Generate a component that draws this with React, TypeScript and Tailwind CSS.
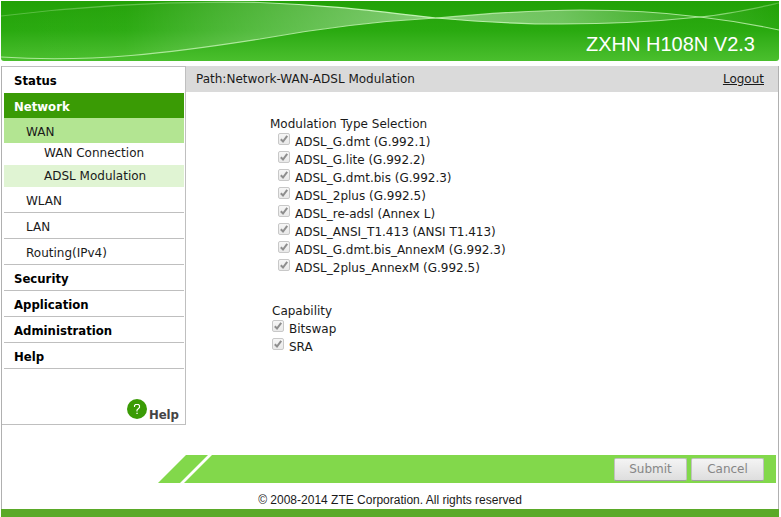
import React from 'react';

const modulationTypes = [
  'ADSL_G.dmt (G.992.1)',
  'ADSL_G.lite (G.992.2)',
  'ADSL_G.dmt.bis (G.992.3)',
  'ADSL_2plus (G.992.5)',
  'ADSL_re-adsl (Annex L)',
  'ADSL_ANSI_T1.413 (ANSI T1.413)',
  'ADSL_G.dmt.bis_AnnexM (G.992.3)',
  'ADSL_2plus_AnnexM (G.992.5)',
];

const capabilities = ['Bitswap', 'SRA'];

function Banner() {
  return (
    <header className="relative mt-px h-[60px] overflow-hidden rounded-b-[3px] bg-linear-to-b from-[#22a107] via-[#2aaa10] to-[#4abf2d]">
      <svg
        className="absolute inset-0 h-full w-full"
        viewBox="0 0 778 60"
        preserveAspectRatio="none"
        aria-hidden="true"
      >
        <defs>
          <linearGradient id="sheen" x1="0" x2="1" y1="0" y2="0">
            <stop offset="0" stopColor="#fff" stopOpacity="0" />
            <stop offset="0.16" stopColor="#fff" stopOpacity="0.02" />
            <stop offset="0.28" stopColor="#fff" stopOpacity="0.16" />
            <stop offset="0.42" stopColor="#fff" stopOpacity="0.3" />
            <stop offset="0.54" stopColor="#fff" stopOpacity="0.42" />
            <stop offset="0.72" stopColor="#fff" stopOpacity="0.34" />
            <stop offset="0.88" stopColor="#fff" stopOpacity="0.1" />
            <stop offset="1" stopColor="#fff" stopOpacity="0" />
          </linearGradient>
          <linearGradient id="upper" x1="0" x2="1" y1="0" y2="0">
            <stop offset="0" stopColor="#c8f5b8" stopOpacity="0.3" />
            <stop offset="0.25" stopColor="#c8f5b8" stopOpacity="0.4" />
            <stop offset="0.4" stopColor="#d8ffcc" stopOpacity="0.9" />
            <stop offset="0.9" stopColor="#c8f5b8" stopOpacity="0.7" />
            <stop offset="1" stopColor="#c8f5b8" stopOpacity="0.3" />
          </linearGradient>
        </defs>
        <path
          d="M0 15C90 4 180 0 259 1.500C330 4 380 11 435 17C480 21 520 23 560 23C620 23 660 20 699 16C730 13 760 6 778 2V29C755 24 725 19 699 16C660 11 620 9 580 9C530 9 480 13 435 17C380 20 320 27 259 38C170 52 90 62 0 56Z"
          fill="url(#sheen)"
        />
        <path
          d="M0 15C90 4 180 0 259 1.500C330 4 380 11 435 17C480 21 520 23 560 23C620 23 660 20 699 16C730 13 760 6 778 2"
          fill="none"
          stroke="url(#upper)"
          strokeWidth="1.200"
        />
        <path
          d="M0 56C90 62 170 52 259 38C320 27 380 20 435 17C480 13 530 9 580 9C620 9 660 11 699 16C725 19 755 24 778 29"
          fill="none"
          stroke="#c4f2b4"
          strokeOpacity="0.8"
          strokeWidth="1.200"
        />
      </svg>
      <h1 className="relative pt-[29px] pr-6 text-right font-['Liberation_Sans',Arial,sans-serif] text-[20px] leading-7 text-white">
        ZXHN H108N V2.3
      </h1>
    </header>
  );
}

function MainItem({ children }: { children: React.ReactNode }) {
  return (
    <a
      href="#"
      className="block h-[26px] border-b border-[#bfbfbf] pl-2.5 font-['DejaVu_Sans_Condensed',Tahoma,sans-serif] text-[13px] leading-[27px] font-bold text-black"
    >
      {children}
    </a>
  );
}

function SubItem({ children }: { children: React.ReactNode }) {
  return (
    <a href="#" className="block h-[26px] border-b border-[#bfbfbf] pl-[22px] leading-[29px]">
      {children}
    </a>
  );
}

function Sidebar() {
  return (
    <aside className="w-[184px] shrink-0 border border-l-0 border-[#bfbfbf] pr-px pl-0.5">
      <nav>
        <a
          href="#"
          className="block h-[26px] pl-2.5 font-['DejaVu_Sans_Condensed',Tahoma,sans-serif] text-[13px] leading-[27px] font-bold text-black"
        >
          Status
        </a>
        <a
          href="#"
          className="block h-[25px] bg-[#3a9b05] pl-2.5 font-['DejaVu_Sans_Condensed',Tahoma,sans-serif] text-[13px] leading-[27px] font-bold text-white"
        >
          Network
        </a>
        <a href="#" className="block h-[25px] bg-[#b3e592] pl-[22px] leading-[29px]">
          WAN
        </a>
        <div className="flex flex-col gap-0.5">
          <a href="#" className="block pl-10 leading-5">
            WAN Connection
          </a>
          <a href="#" className="block bg-[#e0f4d3] pl-10 leading-[22px]">
            ADSL Modulation
          </a>
        </div>
        <SubItem>WLAN</SubItem>
        <SubItem>LAN</SubItem>
        <SubItem>Routing(IPv4)</SubItem>
        <MainItem>Security</MainItem>
        <MainItem>Application</MainItem>
        <MainItem>Administration</MainItem>
        <MainItem>Help</MainItem>
      </nav>
      <a
        href="#"
        className="mt-[30px] flex items-start justify-end gap-0.5 pr-[5px] pb-px font-['DejaVu_Sans_Condensed',Tahoma,sans-serif] text-[13px] font-bold text-[#444]"
      >
        <svg className="h-5 w-5" viewBox="0 0 20 20" aria-hidden="true">
          <circle cx="10" cy="10" r="10" fill="#3a9b05" />
          <path
            d="M7.500 8V6.500L8.500 5.500H11.500L12.500 6.500V8.500L10 11V12.500"
            fill="none"
            stroke="#fff"
            strokeWidth="1.100"
          />
          <path d="M9.400 13.800h1.300v1.300h-1.300z" fill="#fff" />
        </svg>
        <span className="pt-2 leading-4">Help</span>
      </a>
    </aside>
  );
}

function CheckRow({ label }: { label: string }) {
  return (
    <label className="flex h-[18px] items-center gap-[5px]">
      <span className="mb-1.5 grid shrink-0">
        <input
          type="checkbox"
          defaultChecked
          disabled
          className="col-start-1 row-start-1 h-3 w-3 appearance-none rounded-[2px] border border-[#c8c8c8] bg-linear-to-b from-[#f6f6f6] to-[#e9e9e9]"
        />
        <svg className="col-start-1 row-start-1 h-3 w-3" viewBox="0 0 12 12" aria-hidden="true">
          <path d="M2.800 6.200L5 8.500L9.200 2.800" fill="none" stroke="#8e8e8e" strokeWidth="2" />
        </svg>
      </span>
      {label}
    </label>
  );
}

function ActionButton({ children }: { children: React.ReactNode }) {
  return (
    <button
      type="button"
      disabled
      className="h-[23px] w-[73px] rounded-[2px] border border-[#c0c0c0] border-b-[#a0a0a0] bg-linear-to-b from-[#f4f4f4] to-[#dedede] leading-5 text-[#868686]"
    >
      {children}
    </button>
  );
}

export default function App() {
  return (
    <div className="flex min-h-screen flex-col bg-white pr-0.5 pl-px font-['DejaVu_Sans',Tahoma,sans-serif] text-[12px] leading-[18px] text-[#1a1a1a]">
      <Banner />
      <div className="mt-[5px] flex grow flex-col border-x border-[#b0b0b0]">
        <div className="flex">
          <Sidebar />
          <main className="min-w-0 grow">
            <div className="flex h-[26px] items-center justify-between bg-[#dadada] pr-3.5 pl-2.5">
              <span>Path:Network-WAN-ADSL Modulation</span>
              <a href="#" className="underline">
                Logout
              </a>
            </div>
            <fieldset className="pt-[23px] pl-[84px]">
              <legend className="contents">Modulation Type Selection</legend>
              <div className="pl-2">
                {modulationTypes.map((label) => (
                  <CheckRow key={label} label={label} />
                ))}
              </div>
            </fieldset>
            <fieldset className="pt-[25px] pl-[86px]">
              <legend className="contents">Capability</legend>
              {capabilities.map((label) => (
                <CheckRow key={label} label={label} />
              ))}
            </fieldset>
          </main>
        </div>
        <div className="mt-[30px] mr-0.5 ml-[156px] flex h-7">
          <svg className="h-7 w-[54px] shrink-0" viewBox="0 0 54 28" aria-hidden="true">
            <path d="M0 28L28 0H50L22 28Z" fill="#82d84b" />
            <path d="M26 28L54 0V28Z" fill="#82d84b" />
          </svg>
          <div className="flex grow items-center justify-end gap-1 bg-[#82d84b] pr-3">
            <ActionButton>Submit</ActionButton>
            <ActionButton>Cancel</ActionButton>
          </div>
        </div>
        <footer className="grow pt-2 text-center font-['Liberation_Sans',Arial,sans-serif] text-[12px] leading-[18px]">
          © 2008-2014 ZTE Corporation. All rights reserved
        </footer>
      </div>
      <div className="h-2 bg-[#5aa928]" />
    </div>
  );
}
